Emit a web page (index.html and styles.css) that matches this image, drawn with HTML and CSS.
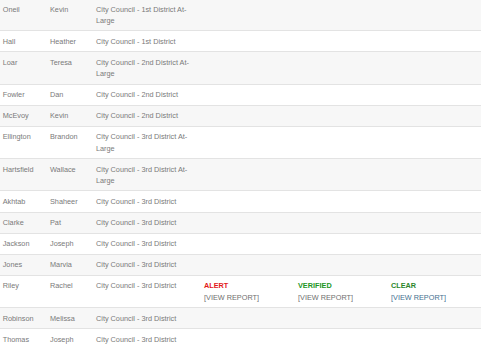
FILE: index.html
```html
<!DOCTYPE html>
<html>
<head>
<meta charset="utf-8">
<link rel="stylesheet" href="styles.css">
</head>
<body>
<table class="results">
  <colgroup>
    <col class="c-last"><col class="c-first"><col class="c-office"><col class="c-stat"><col class="c-stat2"><col class="c-stat3">
  </colgroup>
  <tbody>
    <tr><td>Oneil</td><td>Kevin</td><td>City Council - 1st District At-Large</td><td></td><td></td><td></td></tr>
    <tr><td>Hall</td><td>Heather</td><td>City Council - 1st District</td><td></td><td></td><td></td></tr>
    <tr><td>Loar</td><td>Teresa</td><td>City Council - 2nd District At-Large</td><td></td><td></td><td></td></tr>
    <tr><td>Fowler</td><td>Dan</td><td>City Council - 2nd District</td><td></td><td></td><td></td></tr>
    <tr><td>McEvoy</td><td>Kevin</td><td>City Council - 2nd District</td><td></td><td></td><td></td></tr>
    <tr><td>Ellington</td><td>Brandon</td><td>City Council - 3rd District At-Large</td><td></td><td></td><td></td></tr>
    <tr><td>Hartsfield</td><td>Wallace</td><td>City Council - 3rd District At-Large</td><td></td><td></td><td></td></tr>
    <tr><td>Akhtab</td><td>Shaheer</td><td>City Council - 3rd District</td><td></td><td></td><td></td></tr>
    <tr><td>Clarke</td><td>Pat</td><td>City Council - 3rd District</td><td></td><td></td><td></td></tr>
    <tr><td>Jackson</td><td>Joseph</td><td>City Council - 3rd District</td><td></td><td></td><td></td></tr>
    <tr><td>Jones</td><td>Marvia</td><td>City Council - 3rd District</td><td></td><td></td><td></td></tr>
    <tr>
      <td>Riley</td><td>Rachel</td><td>City Council - 3rd District</td>
      <td><span class="status alert">ALERT</span><br><span class="report">[VIEW REPORT]</span></td>
      <td><span class="status verified">VERIFIED</span><br><span class="report">[VIEW REPORT]</span></td>
      <td><span class="status clear">CLEAR</span><br><a class="report link" href="#">[VIEW REPORT]</a></td>
    </tr>
    <tr><td>Robinson</td><td>Melissa</td><td>City Council - 3rd District</td><td></td><td></td><td></td></tr>
    <tr><td>Thomas</td><td>Joseph</td><td>City Council - 3rd District</td><td></td><td></td><td></td></tr>
  </tbody>
</table>
</body>
</html>
```

FILE: styles.css
```css
html, body {
  margin: 0;
  padding: 0;
  background: #ffffff;
  overflow: hidden;
}

.results {
  border-collapse: collapse;
  table-layout: fixed;
  width: 490px;
  margin: -2px 0 0 -1.8px;
  font-family: "Liberation Sans", Arial, sans-serif;
  font-size: 7.3px;
  line-height: 11.2px;
  color: #7a7a7a;
}

.c-last { width: 47.3px; }
.c-first { width: 46px; }
.c-office { width: 108px; }
.c-stat { width: 94px; }
.c-stat2 { width: 93px; }
.c-stat3 { width: 101.7px; }

.results td {
  padding: 4.5px 4.5px 4.4px;
  border-top: 1px solid #e3e3e3;
  vertical-align: top;
  text-align: left;
}

.results tr:nth-child(odd) td {
  background: #f7f7f7;
}

.status {
  font-weight: bold;
}

.alert { color: #e3191b; }
.verified { color: #22961f; }
.clear { color: #2b862b; }

.report {
  color: #6f6f6f;
}

.link {
  color: #45708f;
  text-decoration: none;
}
```
